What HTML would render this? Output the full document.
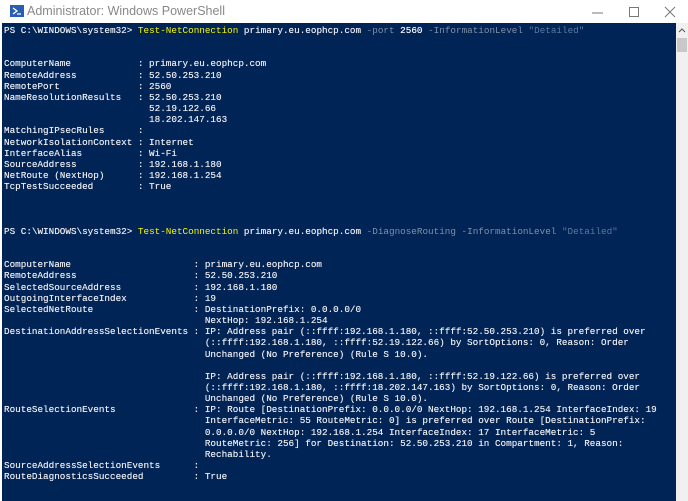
<!DOCTYPE html>
<html><head><meta charset="utf-8"><style>
html,body{margin:0;padding:0;width:688px;height:501px;overflow:hidden;background:#fff;font-family:"Liberation Sans",sans-serif}
#title{position:absolute;left:0;top:0;width:688px;height:23px;background:#fff}
#title .t{position:absolute;left:27px;top:4px;font-size:12.5px;color:#888}
#con{position:absolute;left:2px;top:23px;width:674px;height:478px;background:#012456}
#sb{position:absolute;left:676px;top:23px;width:12px;height:478px;background:#f0f0f0}
#thumb{position:absolute;left:677px;top:38px;width:10px;height:14px;background:#c8c8c8}
pre{position:absolute;left:4px;top:25px;margin:0;font-family:"Liberation Mono",monospace;font-size:9.3px;line-height:11.15px;color:#ececf0;text-shadow:0 0 0.4px #ececf0}
.y{color:#f5f500;text-shadow:none}.g{color:#8090a8;text-shadow:none}.s{color:#5a7aa0;text-shadow:none}.w{color:#fff}
</style></head><body>
<div id="title">
<svg style="position:absolute;left:10px;top:5px" width="14" height="12"><rect x="0" y="0" width="14" height="12" fill="#2a5fb0"/><path d="M3 3l4 3-4 3M7 9h4" stroke="#fff" stroke-width="1.3" fill="none"/></svg>
<span class="t">Administrator: Windows PowerShell</span>
<svg style="position:absolute;left:590px;top:6px" width="90" height="12"><path d="M2 7h11" stroke="#777"/><rect x="39.5" y="1.5" width="9" height="9" fill="none" stroke="#777"/><path d="M75 1l10 10M85 1l-10 10" stroke="#777"/></svg>
</div>
<div id="con"></div>
<div id="sb"></div><div id="thumb"></div>
<svg style="position:absolute;left:678px;top:27px" width="8" height="6"><path d="M1 5l3-3 3 3" stroke="#555" fill="none"/></svg>
<pre>PS C:\WINDOWS\system32&gt; <span class="y">Test-NetConnection</span> primary.eu.eophcp.com <span class="g">-port</span> <span class="w">2560</span> <span class="g">-InformationLevel</span> <span class="s">"Detailed"</span>


ComputerName            : primary.eu.eophcp.com
RemoteAddress           : 52.50.253.210
RemotePort              : 2560
NameResolutionResults   : 52.50.253.210
                          52.19.122.66
                          18.202.147.163
MatchingIPsecRules      :
NetworkIsolationContext : Internet
InterfaceAlias          : Wi-Fi
SourceAddress           : 192.168.1.180
NetRoute (NextHop)      : 192.168.1.254
TcpTestSucceeded        : True



PS C:\WINDOWS\system32&gt; <span class="y">Test-NetConnection</span> primary.eu.eophcp.com <span class="g">-DiagnoseRouting</span> <span class="g">-InformationLevel</span> <span class="s">"Detailed"</span>


ComputerName                      : primary.eu.eophcp.com
RemoteAddress                     : 52.50.253.210
SelectedSourceAddress             : 192.168.1.180
OutgoingInterfaceIndex            : 19
SelectedNetRoute                  : DestinationPrefix: 0.0.0.0/0
                                    NextHop: 192.168.1.254
DestinationAddressSelectionEvents : IP: Address pair (::ffff:192.168.1.180, ::ffff:52.50.253.210) is preferred over
                                    (::ffff:192.168.1.180, ::ffff:52.19.122.66) by SortOptions: 0, Reason: Order
                                    Unchanged (No Preference) (Rule S 10.0).

                                    IP: Address pair (::ffff:192.168.1.180, ::ffff:52.19.122.66) is preferred over
                                    (::ffff:192.168.1.180, ::ffff:18.202.147.163) by SortOptions: 0, Reason: Order
                                    Unchanged (No Preference) (Rule S 10.0).
RouteSelectionEvents              : IP: Route [DestinationPrefix: 0.0.0.0/0 NextHop: 192.168.1.254 InterfaceIndex: 19
                                    InterfaceMetric: 55 RouteMetric: 0] is preferred over Route [DestinationPrefix:
                                    0.0.0.0/0 NextHop: 192.168.1.254 InterfaceIndex: 17 InterfaceMetric: 5
                                    RouteMetric: 256] for Destination: 52.50.253.210 in Compartment: 1, Reason:
                                    Rechability.
SourceAddressSelectionEvents      :
RouteDiagnosticsSucceeded         : True</pre>
</body></html>
